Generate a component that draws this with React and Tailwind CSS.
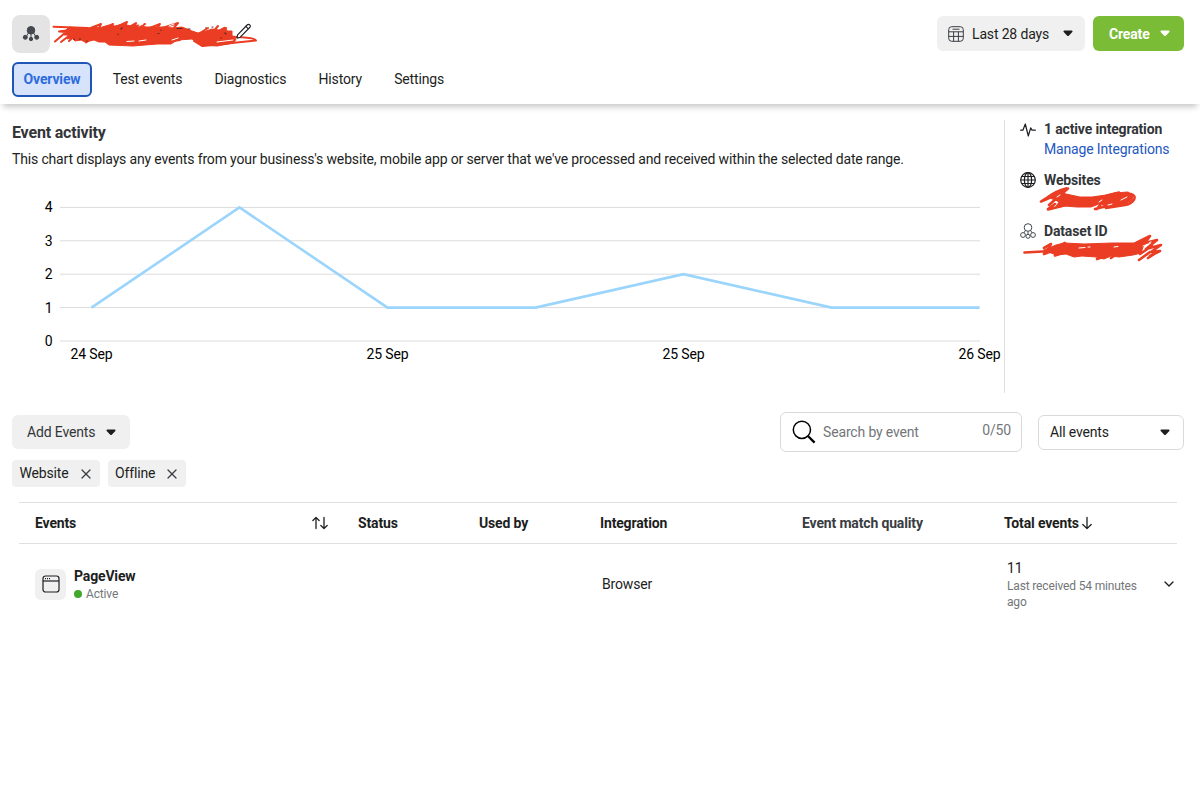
import React from 'react'
import { ChevronDown, X } from 'lucide-react'

const tabs = [
  { name: 'Overview', active: true },
  { name: 'Test events' },
  { name: 'Diagnostics' },
  { name: 'History' },
  { name: 'Settings' },
]

const points = [1, 4, 1, 1, 2, 1, 1]
const xLabels = [
  { x: 91.5, text: '24 Sep' },
  { x: 387.5, text: '25 Sep' },
  { x: 683.5, text: '25 Sep' },
  { x: 979.5, text: '26 Sep' },
]

const Caret = ({ className }) => (
  <svg width="10" height="7" viewBox="0 0 10 7" className={className} fill="currentColor">
    <path d="M1.3 0.6h7.4c.8 0 1.1.8.6 1.4L6 5.6a1.4 1.4 0 0 1-2 0L.7 2C.2 1.4.5.6 1.3.6z" />
  </svg>
)

const DatasetIcon = () => (
  <svg width="18" height="18" viewBox="0 0 18 18" fill="#44494f" stroke="#44494f">
    <path d="M9 6v8M7 7 4 12M11 7l3 5" strokeWidth="1" />
    <circle cx="9" cy="5.3" r="3.8" />
    <circle cx="3.3" cy="12.3" r="2" />
    <circle cx="9" cy="14" r="1.7" />
    <circle cx="14.7" cy="12.3" r="2" />
  </svg>
)

const DatasetOutlineIcon = () => (
  <svg width="16" height="16" viewBox="0 0 16 16" fill="none" stroke="#444950" strokeWidth="1">
    <circle cx="8" cy="4.5" r="3.8" />
    <circle cx="3" cy="12" r="2.4" />
    <circle cx="13" cy="12" r="2.4" />
    <circle cx="8" cy="13.3" r="2" />
    <path d="M8 8.3v3M5.4 7.4 4 9.8M10.6 7.4l1.4 2.4" />
  </svg>
)

const CalendarIcon = () => (
  <svg width="16" height="16" viewBox="0 0 16 16" fill="none" stroke="#3a3d42" strokeWidth="1">
    <rect x="0.7" y="0.7" width="14.6" height="14.6" rx="3" />
    <path d="M.7 5.8h14.6M.7 10.4h14.6M5.6 5.8v9.5M10.4 5.8v9.5M4.5 3.2h7" />
  </svg>
)

const GlobeIcon = () => (
  <svg width="16" height="16" viewBox="0 0 16 16" fill="none" stroke="#1c1e21" strokeWidth="1.2">
    <circle cx="8" cy="8" r="7.3" />
    <ellipse cx="8" cy="8" rx="3.6" ry="7.3" />
    <path d="M8 .7v14.6M.7 8h14.6M1.7 4.5h12.6M1.7 11.5h12.6" />
  </svg>
)

const PulseIcon = () => (
  <svg width="16" height="16" viewBox="0 0 16 16" fill="none" stroke="#1c1e21" strokeWidth="1.2" strokeLinejoin="round" strokeLinecap="round">
    <path d="M.7 8.2h2.2L5.3 2l3 12 2.4-8.2 1.3 2.4h3.3" />
  </svg>
)

const WindowIcon = () => (
  <svg width="18" height="18" viewBox="0 0 18 18" fill="none" stroke="#1c1e21" strokeWidth="1.2">
    <rect x="1" y="1" width="16" height="16" rx="2.5" />
    <path d="M1 6h16" />
    <path d="M3 3.6h5" strokeDasharray="1 1" />
  </svg>
)

const PencilIcon = () => (
  <svg width="17" height="17" viewBox="0 0 17 17" fill="#fff" stroke="#1c1e21" strokeWidth="1.1" strokeLinejoin="round">
    <path d="m1.6 11.8 9.5-9.8c.8-.8 1.9-.8 2.6-.1.8.8.8 1.8 0 2.6L4.2 14.2 1 15.2z" />
    <path d="m9.8 3.3 2.6 2.6" />
  </svg>
)

const SearchIcon = () => (
  <svg width="24" height="24" viewBox="0 0 24 24" fill="none" stroke="#000">
    <circle cx="9.9" cy="9.8" r="8.6" strokeWidth="1.5" />
    <path d="M16.2 16.2 22.6 22.6" strokeWidth="2.3" />
  </svg>
)

const SortIcon = () => (
  <svg width="16" height="14" viewBox="0 0 16 14" fill="none" stroke="#1c1e21" strokeWidth="1.3" strokeLinejoin="round" strokeLinecap="round">
    <path d="M4 12.6V1.4M.9 4.5 4 1.4l3.1 3.1M12 1.4v11.2M8.9 9.5l3.1 3.1 3.1-3.1" />
  </svg>
)

const DownIcon = () => (
  <svg width="10" height="14" viewBox="0 0 10 14" fill="none" stroke="#1c1e21" strokeWidth="1.3" strokeLinejoin="round" strokeLinecap="round">
    <path d="M5 1.4v11.2M.8 8.5 5 12.6l4.2-4.1" />
  </svg>
)

/* red marker over the dataset name */
const NameScribble = () => (
  <svg width="208" height="34" viewBox="50 18 208 34" fill="none" stroke="#ea3d23" strokeLinecap="round" strokeLinejoin="round">
    <path
      fill="#ea3d23"
      strokeWidth="1"
      d="M60 31l6-1 3-3 12 1 8 1 6-3 4 2 10-3 6 1 8-2 8 2 7-1 8 2 8 0 10 0 9 1 9-1 10 4 6 2 8-2 6-2 7 1 6-3 2 4 5 0 0 5 4 3-2 4-17 3-16-1-9-6-15 1-6 4-14 0-24 2-24-1-4-3-6 0-5-2-9 2-4-2-6 1-3-3-5 1 1-4-4 0 3-4z"
    />
    <path
      strokeWidth="2"
      d="M53.500 26.700L88 28M55 41.500L66 32 59 31.500M61 42L70 35M69 41L78 33M86 42.500L100 33M88 29L101 24 97 32 113 24 108 31 127 22 122 31 136 23 133 30 145 24M142 31L160 24 156 30 178 23 172 30 181 28M112 43.500L162 43 180 40M131 41L166 35M166 42L188 37M203 46L256 40.500C254 37 240 38 228 36M194 41L202 46M208 28L200 33M218 26L212 33M226 28L222 38"
    />
    <path stroke="#fff" strokeWidth="1" d="M127 41.500l7-.5M139 41l7-1M172 40l6-2M139 26l4-2M169 26l5-2M217 42l16-2" />
    <path stroke="#5b2a22" strokeWidth="1.2" d="M74 39v.5M80 38.500v1M87 41v.3M118 34v.5M121 29l1-1M158 33.500h1M161 30v.5M177 28.500h5M188 29h2M206 28v-.5M212 27h1M225 33l1 1M221 38h.5" />
  </svg>
)

const WebsiteScribble = () => (
  <svg width="98" height="28" viewBox="1038 184 98 28" fill="none" stroke="#ea3d23" strokeLinecap="round" strokeLinejoin="round">
    <path fill="#ea3d23" strokeWidth="1" d="M1048 196l12-5 6 2 14 3 12 0 14-2 8-2 14-1 5 3-1 5-7 4-14 3-12-3-8 3-14 0-12-1-10 2 4-6z" />
    <path
      strokeWidth="2.6"
      d="M1066 187.500C1060 189 1052 193 1048 196L1041 200.500 1047 198 1060 191 1068 187.500 1058 196 1049 204M1048 208.500L1066 204M1048 208L1055 203M1095 208L1107 205M1097 208L1104 199M1106 195L1119 191.500 1116 197M1114 195L1131 193C1138 195 1134 202 1125 204L1106 207"
    />
    <path stroke="#fff" strokeWidth="1" d="M1099 201l3-2M1108 204l4-1M1121 199l6-3M1057 196l3-2" />
  </svg>
)

const IdScribble = () => (
  <svg width="142" height="30" viewBox="1022 234 142 30" fill="none" stroke="#ea3d23" strokeLinecap="round" strokeLinejoin="round">
    <path fill="#ea3d23" strokeWidth="1" d="M1044 250l12-5 8-2 20 1 28-1 22 0 7-2 4-2 2 3-4 5-2 6-8 2-14 2-8-1-7 3-8-2-14-1-8 1-8-3-10 1-5-2z" />
    <path
      strokeWidth="2.6"
      d="M1024.500 252.500L1052 251 1044 254M1044 248L1051 244 1049 248M1056 248L1065 243M1055 255.500L1066 252M1097 259L1108 255M1111 258L1117 254M1136 243L1150 236 1145 243 1157 240 1146 249 1161 245 1151 252 1160 251 1150 256M1139 260L1150 252M1140 254L1152 246M1148 258L1156 253"
    />
    <path stroke="#fff" strokeWidth="1" d="M1079 248l6-.5M1088 247h2M1114 247l4-.5M1143 246l1.500-.7M1149 243l2-1" />
  </svg>
)

const EventChart = () => {
  const line = points.map((v, i) => `${91.5 + i * 148},${341 - v * 33.4}`).join(' ')
  return (
    <svg width="991" height="180" viewBox="12 190 991 180" className="overflow-visible">
      {[0, 1, 2, 3, 4].map((v) => (
        <g key={v}>
          <path d={`M60 ${341 - v * 33.4}H980`} stroke="#dcdcdc" />
          <text x="48.5" y={346 - v * 33.4} textAnchor="middle" fontSize="14" fill="#000">{v}</text>
        </g>
      ))}
      {xLabels.map((l) => (
        <text key={l.x} x={l.x} y="359" textAnchor="middle" fontSize="14" fill="#000">{l.text}</text>
      ))}
      <polyline points={line} fill="none" stroke="#9bd5fb" strokeWidth="2.6" />
    </svg>
  )
}

const Header = () => (
  <header className="h-[104px] bg-white shadow-[0_6px_6px_-3px_rgba(0,0,0,0.22)] pl-3 pr-4 pt-[15px]">
    <div className="flex items-start justify-between h-[47px]">
      <div className="flex items-start">
        <div className="w-[38px] h-[38px] rounded-lg bg-[#e4e4e4] flex items-center justify-center">
          <DatasetIcon />
        </div>
        <div className="relative pt-[3px]">
          <NameScribble />
          <div className="absolute left-[186px] top-[8px]">
            <PencilIcon />
          </div>
        </div>
      </div>
      <div className="flex gap-2 pt-px">
        <button className="w-[148px] h-[35px] rounded-md bg-[#f0f0f0] flex items-center pl-[11px] pr-3 text-[#1c1e21]">
          <CalendarIcon />
          <span className="ml-2">Last 28 days</span>
          <Caret className="ml-auto" />
        </button>
        <button className="w-[91px] h-[35px] rounded-md bg-[#7abc36] text-white font-bold flex items-center justify-between pl-4 pr-[14px]">
          Create
          <Caret />
        </button>
      </div>
    </div>
    <nav className="flex gap-[9px]">
      {tabs.map((tab) => (
        <button
          key={tab.name}
          className={`h-[35px] px-[9.6px] pb-[2px] rounded-md border-2 ${tab.active ? 'bg-[#d6e3fa] border-[#1f55b5] text-[#2d6be0] font-bold' : 'border-transparent'}`}
        >
          {tab.name}
        </button>
      ))}
    </nav>
  </header>
)

const Sidebar = () => (
  <aside className="mt-4 h-[273px] border-l border-[#dddfe2] pl-[15px] w-[196px] text-[#333539]">
    <div className="flex gap-2 h-[51px]">
      <div className="pt-[2px]"><PulseIcon /></div>
      <div className="-mt-px leading-5">
        <div className="font-bold">1 active integration</div>
        <a className="text-[#2457c0]">Manage Integrations</a>
      </div>
    </div>
    <div className="flex gap-2 h-[51px]">
      <div className="pt-px"><GlobeIcon /></div>
      <div className="relative -mt-px leading-5">
        <div className="font-bold">Websites</div>
        <div className="absolute left-[-6px] top-[15px]"><WebsiteScribble /></div>
      </div>
    </div>
    <div className="flex gap-2">
      <div className="pt-px"><DatasetOutlineIcon /></div>
      <div className="relative -mt-px leading-5">
        <div className="font-bold">Dataset ID</div>
        <div className="absolute left-[-22px] top-[13px]"><IdScribble /></div>
      </div>
    </div>
  </aside>
)

const Chip = ({ label }) => (
  <span className="h-[27px] rounded bg-[#f0f0f0] flex items-center gap-[9px] pl-[7.5px] pr-[6px]">
    <span className="pb-[2px]">{label}</span>
    <X size={16} strokeWidth={1.9} className="text-[#3a3d42]" />
  </span>
)

const Toolbar = () => (
  <div className="flex items-start pl-3 pr-4 pt-[19px]">
    <button className="mt-[3px] w-[118px] h-[34px] rounded-md bg-[#f0f0f0] flex items-center justify-between pl-[15px] pr-[14px] text-[#333539]">
      Add Events
      <Caret className="text-[#1c1e21]" />
    </button>
    <div className="ml-auto w-[242px] h-[40px] border border-[#dadada] rounded-md flex items-center pl-[11px] pr-[10px] text-[#737679]">
      <SearchIcon />
      <span className="ml-[7px]">Search by event</span>
      <span className="ml-auto pb-1">0/50</span>
    </div>
    <button className="ml-4 mt-[3px] w-[146px] h-[35px] border border-[#dadada] rounded-md flex items-center justify-between pl-[11px] pr-[13px]">
      <span className="pb-[2px]">All events</span>
      <Caret />
    </button>
  </div>
)

const EventsTable = () => (
  <div className="ml-[19px] mr-[23px] mt-[15px]">
    <div className="flex items-center h-[42px] border-y border-[#e0e0e0] font-bold pl-4">
      <div className="w-[323px] flex items-center justify-between pr-[30px]">
        Events
        <SortIcon />
      </div>
      <div className="w-[121px]">Status</div>
      <div className="w-[121px]">Used by</div>
      <div className="w-[202px]">Integration</div>
      <div className="w-[202px] text-[#3a3d42]">Event match quality</div>
      <div className="flex items-center gap-[3px]">
        Total events
        <DownIcon />
      </div>
    </div>
    <div className="flex items-center h-[80px] pl-4">
      <div className="w-[567px] flex items-center gap-2">
        <div className="w-[31px] h-[31px] rounded-md bg-[#f0f0f0] flex items-center justify-center">
          <WindowIcon />
        </div>
        <div className="pt-px">
          <div className="font-bold leading-[18px]">PageView</div>
          <div className="mt-px flex items-center gap-1 text-xs text-[#737679]">
            <span className="w-2 h-2 rounded-full bg-[#42a72a]" />
            Active
          </div>
        </div>
      </div>
      <div className="w-[405px]">Browser</div>
      <div className="w-[145px] pt-[2px]">
        <div className="-mt-px mb-px leading-[18px]">11</div>
        <div className="text-xs text-[#737679]">Last received 54 minutes ago</div>
      </div>
      <ChevronDown size={16} strokeWidth={2} className="ml-auto" />
    </div>
  </div>
)

const App = () => {
  return (
    <div className="w-[1200px] h-[800px] bg-white overflow-hidden text-sm tracking-[-0.155px] text-[#1c1e21] font-['Roboto','Liberation_Sans',sans-serif]">
      <Header />
      <main>
        <div className="flex">
          <section className="w-[1004px] pl-3 pt-[19px]">
            <h2 className="text-base leading-5 tracking-[-0.18px] font-bold text-[#333539]">Event activity</h2>
            <p className="mt-[6px] leading-5">
              This chart displays any events from your business's website, mobile app or server that we've processed and received within the selected date range.
            </p>
            <div className="mt-[21px]">
              <EventChart />
            </div>
          </section>
          <Sidebar />
        </div>
        <Toolbar />
        <div className="flex gap-2 pl-3 mt-2">
          <Chip label="Website" />
          <Chip label="Offline" />
        </div>
        <EventsTable />
      </main>
    </div>
  )
}

export default App
